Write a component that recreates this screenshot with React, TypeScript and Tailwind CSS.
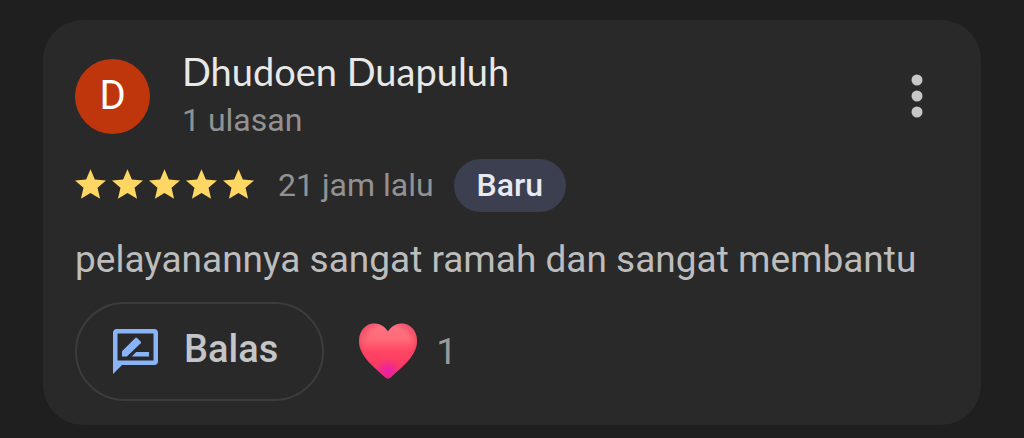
interface Review {
  author: string;
  reviewCount: string;
  rating: number;
  time: string;
  text: string;
  likes: number;
}

const review: Review = {
  author: "Dhudoen Duapuluh",
  reviewCount: "1 ulasan",
  rating: 5,
  time: "21 jam lalu",
  text: "pelayanannya sangat ramah dan sangat membantu",
  likes: 1,
};

const HEART_PATH =
  "M30 8.500C27 3.500 22 0.500 16.500 0.500 7.500 0.500 1 8 1 18 1 33 16 44 27.500 54.500c1.600 1.300 3.400 1.300 5 0C44 44 59 33 59 18 59 8 52.500 0.500 43.500 0.500 38 0.500 33 3.500 30 8.500z";

function Star() {
  return (
    <svg viewBox="2 2 20 19" className="w-[31px] h-[30px] fill-[#fdd663]" aria-hidden="true">
      <path d="M12 17.27 18.18 21l-1.64-7.03L22 9.24l-7.19-.61L12 2 9.19 8.63 2 9.24l5.46 4.73L5.82 21z" />
    </svg>
  );
}

function ReplyIcon() {
  return (
    <svg viewBox="2 2 20 20" className="size-[45px] shrink-0 fill-[#8ab4f8]" aria-hidden="true">
      <path d="M20.4 2H3.6C2.7 2 2 2.7 2 3.6V22l4-4h14.4c.9 0 1.6-.7 1.6-1.6V3.6c0-.9-.7-1.6-1.6-1.6zM20 16H4V4h16z" />
      <path d="M6 14.2v-2.3l5.9-5.9a.6.6 0 0 1 .8 0l1.6 1.5a.6.6 0 0 1 0 .8L8.2 14.2z" />
      <path d="M10.3 14.2H18v-2h-5.7z" />
    </svg>
  );
}

function Heart() {
  return (
    <svg viewBox="0 0 60 58" className="w-[60px] h-[58px]" aria-hidden="true">
      <defs>
        <linearGradient id="heart-fill" x1="0" y1="0" x2="0" y2="1">
          <stop offset="0" stopColor="#ff7484" />
          <stop offset="0.28" stopColor="#ff6a78" />
          <stop offset="0.5" stopColor="#ff4664" />
          <stop offset="0.75" stopColor="#fa3a62" />
          <stop offset="1" stopColor="#f4306a" />
        </linearGradient>
        <radialGradient id="heart-edge" cx="0.5" cy="0.45" r="0.6">
          <stop offset="0.65" stopColor="#e0284c" stopOpacity="0" />
          <stop offset="1" stopColor="#e0284c" stopOpacity="0.6" />
        </radialGradient>
        <radialGradient id="heart-tip" cx="0.5" cy="0.86" r="0.22">
          <stop offset="0" stopColor="#ea1cb4" stopOpacity="0.9" />
          <stop offset="1" stopColor="#ea1cb4" stopOpacity="0" />
        </radialGradient>
      </defs>
      <path fill="url(#heart-fill)" d={HEART_PATH} />
      <path fill="url(#heart-edge)" d={HEART_PATH} />
      <path fill="url(#heart-tip)" d={HEART_PATH} />
    </svg>
  );
}

export default function App() {
  return (
    <main className="min-h-screen bg-[#1f1f1f] px-[43px] pt-5 pb-3 font-[Roboto,sans-serif]">
      <article className="rounded-[40px] bg-[#292929] px-8 pt-[27px] pb-6">
        {/* Author */}
        <header className="flex items-center">
          <div className="flex size-[75px] shrink-0 items-center justify-center rounded-full bg-[#bf360c] text-[40px] text-white">
            {review.author[0]}
          </div>
          <div className="ml-8 min-w-0 flex-1">
            <h2 className="font-[Lato,sans-serif] text-[38px] leading-[48px] text-[#e8e8e8]">{review.author}</h2>
            <p className="text-[32px] leading-[50px] text-[#929292]">{review.reviewCount}</p>
          </div>
          <button type="button" aria-label="Opsi lainnya" className="flex w-16 justify-center py-4">
            <svg viewBox="0 0 12 44" className="w-3 h-11 fill-[#c7c7c7]" aria-hidden="true">
              <circle cx="6" cy="6" r="5.5" />
              <circle cx="6" cy="22" r="5.5" />
              <circle cx="6" cy="38" r="5.5" />
            </svg>
          </button>
        </header>

        {/* Rating */}
        <div className="mt-[14px] flex items-center">
          <div className="flex gap-[6px] pb-1" role="img" aria-label="5 bintang">
            {Array.from({ length: review.rating }, (_, i) => (
              <Star key={i} />
            ))}
          </div>
          <span className="ml-6 text-[32px] leading-[53px] text-[#929292]">{review.time}</span>
          <span className="ml-5 rounded-full bg-[#3b3f50] px-[23px] text-[32px] leading-[53px] font-medium text-[#e8eaf0]">
            Baru
          </span>
        </div>

        <p className="mt-6 text-[37px] leading-[48px] text-[#bdbdbd]">{review.text}</p>

        {/* Actions */}
        <div className="mt-[18px] flex items-center gap-[34px]">
          <button
            type="button"
            className="flex h-[99px] items-center gap-[26px] rounded-full border-2 border-[#3c3c3c] pr-11 pl-9 text-[38px] font-medium text-[#c4c5c8]"
          >
            <ReplyIcon />
            <span className="pb-1">Balas</span>
          </button>
          <button type="button" aria-label="Suka" className="flex items-center gap-[18px] text-[37px] text-[#9a9a9a]">
            <Heart />
            {review.likes}
          </button>
        </div>
      </article>
    </main>
  );
}
